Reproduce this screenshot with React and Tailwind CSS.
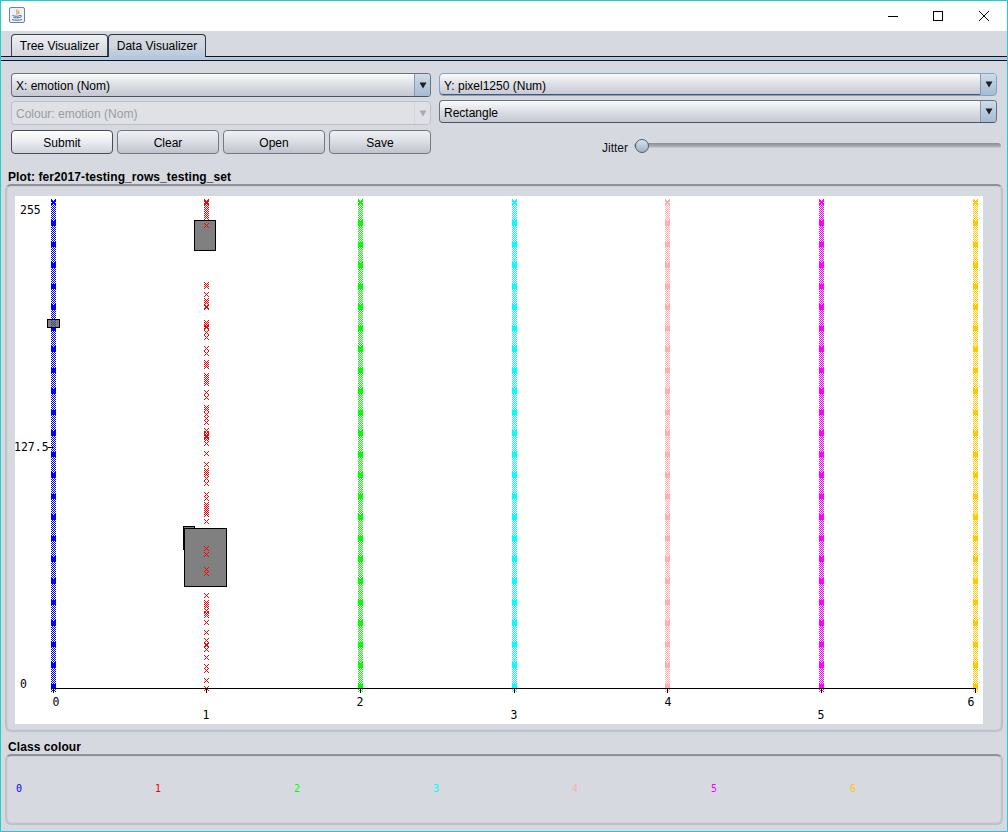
import React from "react";

const COLS = [
  { left: 51, color: "#0000ff" },
  { left: 204, color: "#ff0000" },
  { left: 358, color: "#00ff00" },
  { left: 512, color: "#00ffff" },
  { left: 665, color: "#ffafaf" },
  { left: 819, color: "#ff00ff" },
  { left: 973, color: "#ffc800" },
];

const AXIS_LABELS = [
  { text: "0", x: 56, y: 706 },
  { text: "1", x: 206, y: 719 },
  { text: "2", x: 360, y: 706 },
  { text: "3", x: 514, y: 719 },
  { text: "4", x: 668, y: 706 },
  { text: "5", x: 821, y: 719 },
  { text: "6", x: 971, y: 706 },
];

// y centres of the sparse red marks, read off the plot
const RED_MARKS = [
  201, 202, 203, 205, 207, 209, 211, 213, 215, 217, 225, 284, 286, 294, 300, 302, 306, 307, 322, 324, 326, 327, 332,
  337, 348, 353, 362, 364, 366, 375, 377, 379, 381, 383, 392, 397, 407, 409, 414, 418, 422, 430, 433, 435, 436, 437,
  439, 443, 453, 464, 470, 472, 474, 478, 483, 494, 498, 504, 506, 508, 510, 512, 514, 521, 548, 554, 569, 573, 595,
  602, 604, 606, 610, 613, 615, 622, 632, 640, 644, 645, 649, 657, 666, 670, 680, 688,
];

const crossPath = (x, y) => {
  const pts = [[0, 0], [4, 0], [1, 1], [3, 1], [2, 2], [1, 3], [3, 3], [0, 4], [4, 4]];
  return pts.map(([a, b]) => `M${x + a} ${y + b}h1v1h-1z`).join("");
};

const densePath = (left) => {
  let d = "";
  for (let y = 199; y <= 687; y += 2) d += crossPath(left, y);
  d += crossPath(left, 200);
  for (let k = 0; k < 23; k++) {
    const y = Math.round(220 + k * 21.03);
    // solid block with a notch top and bottom
    d += crossPath(left, y) + `M${left} ${y + 1}h5v5h-5z`;
  }
  return d;
};

function PlotChart() {
  return (
    <svg width="968" height="528" viewBox="15 196 968 528" shapeRendering="crispEdges" className="block bg-white">
      <path d={densePath(51)} fill={COLS[0].color} />
      {COLS.slice(2).map((c) => (
        <path key={c.left} d={densePath(c.left)} fill={c.color} />
      ))}
      <rect x="47.5" y="319.5" width="12" height="8" fill="#808080" stroke="#000" />
      <path d={crossPath(51, 320) + crossPath(51, 322)} fill="#4040b0" />
      <rect x="194.5" y="220.5" width="21" height="30" fill="#808080" stroke="#000" />
      <rect x="183.5" y="526.5" width="11" height="23" fill="#808080" stroke="#000" />
      <rect x="184.5" y="528.5" width="42" height="58" fill="#808080" stroke="#000" />
      <path d={RED_MARKS.map((y) => crossPath(204, y - 2)).join("")} fill={COLS[1].color} />
      <path d="M53 688.5H976M48 447.5H53" stroke="#000" fill="none" />
      {COLS.map((c) => (
        <path key={c.left} d={`M${c.left + 2.5} 689V693`} stroke="#000" fill="none" />
      ))}
      <g fontFamily="'DejaVu Sans Mono', monospace" fontSize="11.5" fill="#000" shapeRendering="auto">
        <text x="20" y="214">255</text>
        <text x="14" y="451">127.5</text>
        <text x="20" y="688">0</text>
        {AXIS_LABELS.map((l) => (
          <text key={l.text} x={l.x} y={l.y} textAnchor="middle">
            {l.text}
          </text>
        ))}
      </g>
    </svg>
  );
}

function JavaIcon() {
  return (
    <svg width="16" height="16" viewBox="0 0 16 16" className="mb-[2px]">
      <rect x="0.5" y="0.5" width="15" height="15" rx="1.5" fill="#eef1f5" stroke="#6f8296" />
      <path d="M8 2.5C6.5 4.5 9.5 5 7.5 7.5M10 3.5C9 5 10.5 5.5 9.5 7" stroke="#e8762b" strokeWidth="1" fill="none" />
      <path d="M3.5 8.5C6 9.5 9 9.5 11 8.5M4.5 10.5C6.5 11 8.5 11 10.5 10.5M11 8.5C13 8 13 10 10.5 10.5M3 12.5C6 13.5 10 13.5 13 12.5" stroke="#3f6fa8" strokeWidth="1" fill="none" />
    </svg>
  );
}

function WindowButtons() {
  return (
    <div className="flex items-center ml-auto">
      <svg width="46" height="30" viewBox="0 0 46 30">
        <path d="M19 15.5H29" stroke="#000" fill="none" shapeRendering="crispEdges" />
      </svg>
      <svg width="46" height="30" viewBox="0 0 46 30">
        <rect x="18.5" y="10.5" width="9" height="9" stroke="#000" fill="none" shapeRendering="crispEdges" />
      </svg>
      <svg width="46" height="30" viewBox="0 0 46 30">
        <path d="M18 10L28 20M28 10L18 20" stroke="#000" fill="none" />
      </svg>
    </div>
  );
}

function Combo({ label, disabled, focused }) {
  const border = disabled
    ? "border-[#bcc0c8]"
    : focused
      ? "border-[#7fa3cb] shadow-[inset_0_-1px_0_#4d5663]"
      : "border-[#6a7280] border-b-[#4d5663]";
  const face = disabled
    ? "bg-[#dfe1e6]"
    : "bg-linear-to-b from-[#fafbfc] via-[#dfe1e7] via-45% to-[#c5c8d1]";
  return (
    <div className={`h-6 flex rounded-[4px] border overflow-hidden ${border} ${face}`}>
      <span className={`flex-1 pl-1 text-xs leading-[24px] ${disabled ? "text-[#9a9da4]" : "text-black"}`}>{label}</span>
      <span
        className={`w-[16px] flex items-center justify-center border-l ${
          disabled ? "border-[#d2d4da]" : "border-[#8b98a8] bg-linear-to-b from-[#cfdbe8] to-[#a5bbd2]"
        }`}
      >
        <svg width="8" height="7" viewBox="0 0 8 7">
          <path d="M0.5 0.5H7.5L4 6.5Z" fill={disabled ? "#a6a9b0" : "#1c2026"} />
        </svg>
      </span>
    </div>
  );
}

function ActionButton({ label, primary }) {
  return (
    <button
      className={`h-6 pt-[2px] rounded-[4px] border text-xs text-black bg-linear-to-b via-45% ${
        primary
          ? "border-[#474d57] from-[#ffffff] via-[#eceef2] to-[#cfd2da]"
          : "border-[#747a84] from-[#f0f1f4] via-[#dcdfe5] to-[#c0c3cc]"
      }`}
    >
      {label}
    </button>
  );
}

function Panel({ className, children }) {
  return (
    <div
      className={`ml-[4px] w-[998px] rounded-[6px] border-2 border-[#bfc2ca] border-t-[#8e9198] shadow-[inset_0_0_1px_#9a9da5] ${className}`}
    >
      {children}
    </div>
  );
}

export default function App() {
  return (
    <div className="w-[1008px] h-[832px] flex flex-col border border-[#1fcfcf] bg-[#d6d9e0] font-['Liberation_Sans',Arial,sans-serif] overflow-hidden">
      <div className="h-[30px] shrink-0 bg-white flex items-center pl-2">
        <JavaIcon />
        <WindowButtons />
      </div>

      <div className="h-[26px] shrink-0 flex pl-[10px] pt-[3px] border-b border-[#0d1320]">
        <div className="w-[97px] rounded-t-[4px] border border-b-0 border-[#3a4452] bg-linear-to-b from-[#eef0f3] to-[#d2d5dc] text-xs text-black text-center leading-[22px]">
          Tree Visualizer
        </div>
        <div className="relative z-10 w-[98px] h-[23px] rounded-t-[4px] border border-b-0 border-[#2b3544] bg-linear-to-b from-[#d6d9e0] via-[#d0d6df] to-[#b4c8de] text-xs text-black text-center leading-[22px]">
          Data Visualizer
        </div>
      </div>
      <div className="h-[4px] shrink-0 bg-[#b4c8de] border-b border-[#0d1320]" />

      <div className="h-[81px] mt-3 shrink-0 flex gap-2 pl-[10px]">
        <div className="w-[420px] flex flex-col gap-1">
          <Combo label="X: emotion (Nom)" />
          <Combo label="Colour: emotion (Nom)" disabled />
          <div className="grid grid-cols-4 gap-1 mt-[1px]">
            <ActionButton label="Submit" primary />
            <ActionButton label="Clear" />
            <ActionButton label="Open" />
            <ActionButton label="Save" />
          </div>
        </div>
        <div className="w-[558px] flex flex-col gap-1">
          <Combo label="Y: pixel1250 (Num)" focused />
          <Combo label="Rectangle" />
          <div className="w-[562px] h-4 mt-[11px] flex items-center pl-[163px]">
            <span className="w-[32px] pt-[4px] text-xs text-[#10101c]">Jitter</span>
            <div className="relative flex-1 h-[6px] rounded-full bg-linear-to-b from-[#8a8d96] via-[#a5a8b0] to-[#e2e4e8]">
              <span className="absolute left-[1px] -top-[4px] w-[14px] h-[14px] rounded-full border border-[#4d5c70] bg-linear-to-b from-[#d9e2ec] to-[#9db3ca]" />
            </div>
          </div>
        </div>
      </div>

      <div className="h-[14px] mt-[15px] mb-[1px] shrink-0 pl-[7px] text-xs font-bold leading-[16px] tracking-[0.08px] text-black">
        Plot: fer2017-testing_rows_testing_set
      </div>
      <Panel className="h-[548px] shrink-0 pl-2 pt-[10px]">
        <PlotChart />
      </Panel>

      <div className="h-[14px] mt-2 shrink-0 pl-[7px] text-xs font-bold leading-[14px] tracking-[0.08px] text-black">Class colour</div>
      <Panel className="h-[71px] shrink-0 flex items-center pl-[9px] pb-[2px]">
        {["text-[#0000ff]", "text-[#ff0000]", "text-[#00ff00]", "text-[#00ffff]", "text-[#ffafaf]", "text-[#ff00ff]", "text-[#ffc800]"].map(
          (color, i) => (
            <span key={color} className={`w-[139px] font-['DejaVu_Sans_Mono',monospace] text-[10px] ${color}`}>
              {i}
            </span>
          ),
        )}
      </Panel>
    </div>
  );
}
